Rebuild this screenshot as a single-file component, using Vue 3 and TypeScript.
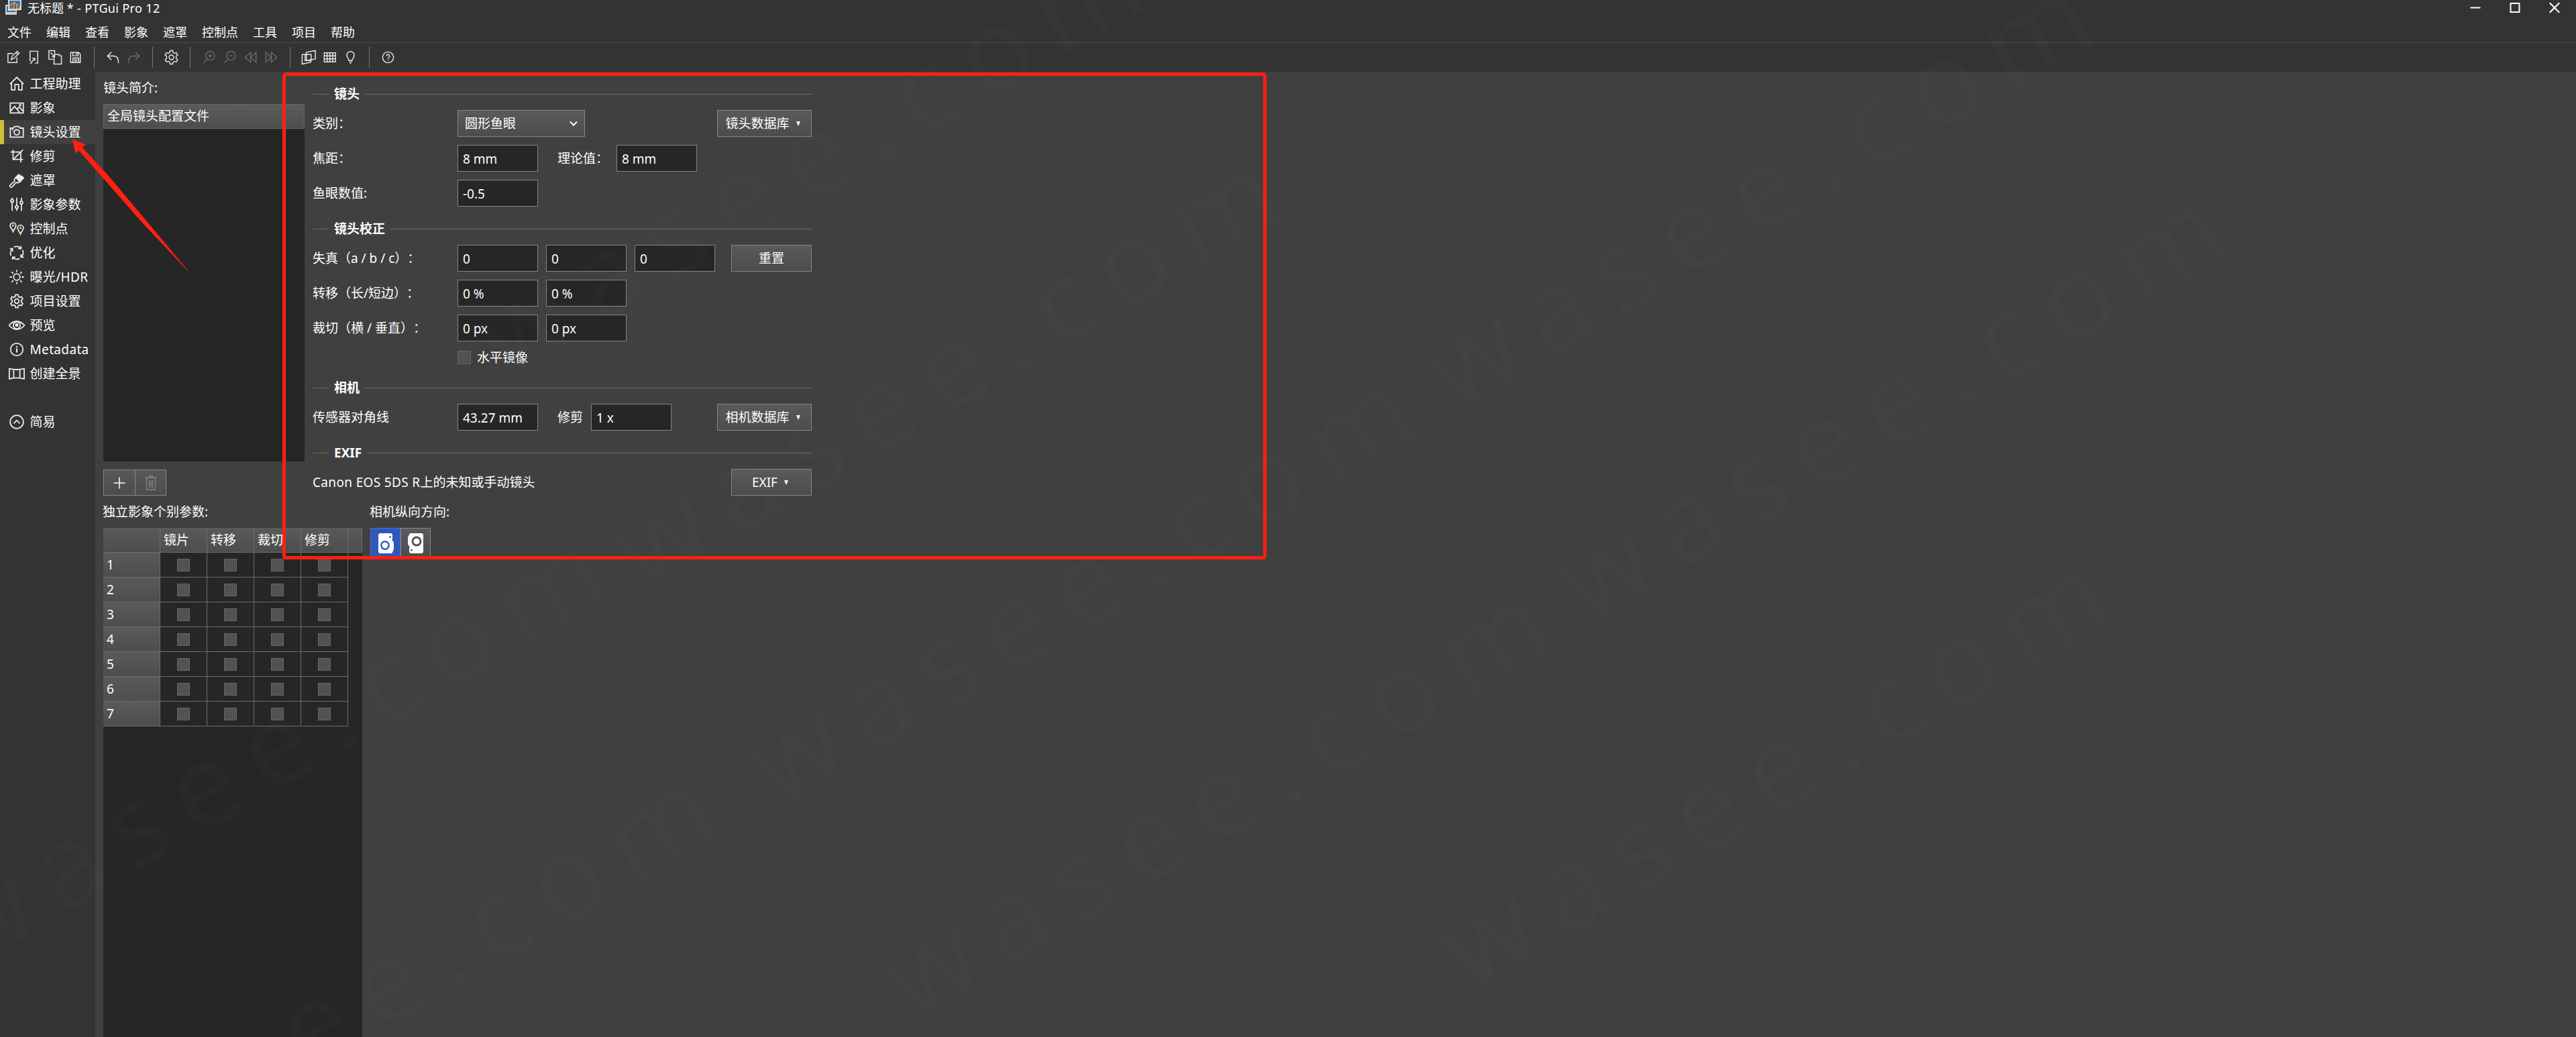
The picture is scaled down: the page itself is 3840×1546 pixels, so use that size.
<script setup lang="ts">
import { ref } from 'vue'

interface NavItem {
  label: string
  icon: string
}

const menus = ['文件', '编辑', '查看', '影象', '遮罩', '控制点', '工具', '项目', '帮助']

const gear =
  '<path d="M10 1.5h4l.6 3.1 2.1 1.2 3-1 2 3.4-2.3 2.2v3.2l2.3 2.2-2 3.4-3-1-2.1 1.2-.6 3.1h-4l-.6-3.1-2.1-1.2-3 1-2-3.4 2.3-2.2v-3.2L2.3 8.200l2-3.400 3 1 2.100-1.200z"/><circle cx="12" cy="12" r="3.600"/>'

const ringArrow = '<path d="M7.500 2.600A10.300 10.300 0 0 1 18 4M18.800 .8V5.200H14.200"/>'

// Each group is separated by a vertical rule; icons are drawn in a 24 x 24 box.
const toolGroups: { icon: string; off?: boolean }[][] = [
  [
    { icon: '<path d="M12 6H4v14h14v-8M9 15.500l1.500-5 8-8 3 3-8 8zM16.500 4.500l3 3"/>' },
    { icon: '<path d="M6 18V2.500h12v18.500h-4M6 21h3M7.500 20l6-6M9.500 13.500h4v4"/>' },
    { icon: '<path d="M10 15H3V1.500h9v6M11 10v12.500h11.500V9.500H19V7.500h-7.500M5.500 4.500l6 6M12 6.500v4.500H7.500"/>' },
    { icon: '<path d="M4.500 4.500h12.500l2.500 2.500v13h-15zM8 4.500v5h8v-5M13.500 5v3M8 20v-7h9v7M10 15.500h5M10 17.700h5"/>' }
  ],
  [
    { icon: '<path d="M9.500 4l-6 6 6 6M4 10h9q7.500 0 7.500 11"/>' },
    { icon: '<path d="M14.500 4l6 6-6 6M20 10h-9q-7.500 0-7.500 11"/>', off: true }
  ],
  [{ icon: gear }],
  [
    { icon: '<circle cx="14" cy="9.500" r="6.800"/><path d="M9.500 14.500L3.500 20.500M14 6.500v6M11 9.500h6"/>', off: true },
    { icon: '<circle cx="14" cy="9.500" r="6.800"/><path d="M9.500 14.500L3.500 20.500M11 9.500h6"/>', off: true },
    { icon: '<path d="M12 4.500v15l-8.500-7.500zM20.500 4.500v15L12 12z"/>', off: true },
    { icon: '<path d="M3.500 4.500v15l8.500-7.500zM12 4.500v15l8.500-7.500z"/>', off: true }
  ],
  [
    { icon: '<path d="M8 4l14-2.500v13L8 17zM6 7.500H1.500v15l13.500-3V17M6 7.500h9.500v9.500H6z"/>' },
    { icon: '<path d="M3.500 5h17.500v14H3.500zM8 5v14M12.200 5v14M16.500 5v14M3.500 9.700h17.500M3.500 14.300h17.500"/>' },
    { icon: '<path d="M9.500 17c0-3-3.300-4.500-3.300-8.300a5.800 5.800 0 0 1 11.600 0c0 3.800-3.300 5.300-3.300 8.300zM10 19.300h4M11 21.500h2"/>' }
  ],
  [{ icon: '<circle cx="12" cy="12" r="8.500"/><path d="M9.600 10a2.400 2.400 0 1 1 3.600 2q-1.200.8-1.200 2M12 15.600v1.400"/>' }]
]

const nav: (NavItem | null)[] = [
  { label: '工程助理', icon: '<path d="M1 12.500L12 1.500l11 11M3.500 10.500V22H9v-9h6v9h5.500V10.500"/>' },
  { label: '影象', icon: '<path d="M1.500 4h21v16h-21zM2 17l6.500-7.500 8 9.500M12.500 14l3.500-3.500 6 6.500"/><circle cx="17.500" cy="7.500" r="1"/>' },
  { label: '镜头设置', icon: '<path d="M1.500 5.500h5l2-2.500h7l2 2.500h5v14.500h-21z"/><circle cx="12" cy="12.300" r="4.300"/><path d="M4 8h2"/>' },
  { label: '修剪', icon: '<path d="M6 1.500V17h16M2 5h16.500v17M22 1.500L6.500 17"/>' },
  {
    label: '遮罩',
    icon: '<path d="M10.500 7l6.500 7-3.500 2-2.500-.8L4.500 22.500a2 2 0 0 1-3-3L8.500 13 8.200 10z"/><path fill="currentColor" d="M11 6.500l4-4 2.500 1.500 0 2.500 2.500-1.500 3 3-6 6.500z"/>'
  },
  {
    label: '影象参数',
    icon: '<path d="M4.500 1v3.500M4.500 8.500V22M12 1v13M12 18v4M19.500 1v6M19.500 11v11"/><circle cx="4.500" cy="6" r="2.200"/><circle cx="12" cy="16" r="2.200"/><circle cx="19.500" cy="9" r="2.200"/>'
  },
  {
    label: '控制点',
    icon: '<path d="M6 16.500c-1-3-4.700-6.500-4.700-9.500a4.700 4.700 0 0 1 9.400 0c0 3-3.700 6.500-4.700 9.500zM18 20.500c-1-3-4.700-6.500-4.700-9.500a4.700 4.700 0 0 1 9.400 0c0 3-3.700 6.500-4.700 9.500z"/><circle cx="6" cy="6.800" r=".6"/><circle cx="18" cy="10.800" r=".6"/>'
  },
  {
    label: '优化',
    icon: [0, 90, 180, 270].map((a) => `<g transform="rotate(${a} 12 12)">${ringArrow}</g>`).join('')
  },
  {
    label: '曝光/HDR',
    icon: '<circle cx="12" cy="12" r="5.200"/><path d="M12 .5v3.500M12 20v3.500M.5 12H4M20 12h3.500M3.800 3.800l2.600 2.600M17.600 17.600l2.600 2.600M20.200 3.800l-2.600 2.600M6.400 17.600l-2.600 2.600"/>'
  },
  { label: '项目设置', icon: gear },
  {
    label: '预览',
    icon: '<path d="M-.5 12Q5 5.500 12 5.500T24.500 12Q19 18.500 12 18.500T-.5 12z"/><circle cx="12" cy="12" r="5.500"/><circle cx="12" cy="11.500" r="1.800" fill="currentColor"/>'
  },
  { label: 'Metadata', icon: '<circle cx="12" cy="12" r="10"/><path stroke-width="2.400" d="M12 10.500V17M12 6.500v2.200"/>' },
  { label: '创建全景', icon: '<path d="M0 4q12 3 24 0v16.500q-12-3-24 0zM7 5.500v13.500M17 5.500v13.500"/>' },
  null,
  { label: '简易', icon: '<circle cx="12" cy="12" r="10.700"/><path d="M7 14.500l5-5 5 5"/>' }
]
const activeNav = ref('镜头设置')

const columns = ['镜片', '转移', '裁切', '修剪']
const rowCount = 7

const watermarks: [number, number][] = [
  [752, 566],
  [957, 882],
  [1157, 1206],
  [1358, 1524],
  [2166, 616],
  [2364, 934],
  [2190, 1480],
  [-50, 1446],
  [114, 1800]
]
</script>

<template>
  <div class="window">
    <header class="titlebar">
      <svg class="logo" width="24" height="24" viewBox="0 0 24 24">
        <path d="M0 7h17v15H0z" fill="#c9cdc8" />
        <path d="M2 9h13v9H2z" fill="#4c6f9c" />
        <path d="M4 -1h20v16L4 16z" fill="#d8dcde" />
        <path d="M6 1h16v12H6z" fill="#3c6da8" />
        <path d="M6 13V7l4-2 3-3 3 3 3 1 3 4v3z" fill="#b49a78" />
        <path d="M8 8v5M11 6v7M15 6v7M19 8v5" stroke="#4b4542" stroke-width="1.500" />
      </svg>
      <span class="title">无标题 <span class="latin">* - PTGui Pro 12</span></span>
      <div class="controls">
        <svg width="16" height="24" viewBox="0 0 16 24"><path d="M.5 11.500h15" /></svg>
        <svg width="16" height="24" viewBox="0 0 16 24"><path d="M1.500 5h13v13h-13z" /></svg>
        <svg width="16" height="24" viewBox="0 0 16 24"><path d="M.8 4.300l14.400 14.400M15.200 4.300L.8 18.700" /></svg>
      </div>
    </header>

    <nav class="menubar">
      <span v-for="m in menus" :key="m">{{ m }}</span>
    </nav>

    <div class="toolbar">
      <template v-for="(group, g) in toolGroups" :key="g">
        <i v-if="g" class="rule"></i>
        <span v-for="(tool, t) in group" :key="t" class="tool" :class="{ off: tool.off }">
          <svg width="23" height="23" viewBox="0 0 24 24" v-html="tool.icon"></svg>
        </span>
      </template>
    </div>

    <div class="body">
      <aside class="sidebar">
        <div
          v-for="(item, i) in nav"
          :key="i"
          class="nav"
          :class="{ active: item && item.label === activeNav }"
        >
          <template v-if="item">
            <svg width="24" height="24" viewBox="-1 -1 26 26" v-html="item.icon"></svg>
            <span :class="{ latin: /[A-Z]/.test(item.label) }">{{ item.label }}</span>
          </template>
        </div>
      </aside>

      <main class="content">
        <div class="upper">
          <section class="profiles">
            <div class="caption">镜头简介:</div>
            <div class="list">
              <div class="entry">全局镜头配置文件</div>
            </div>
            <div class="actions">
              <button class="add">
                <svg width="20" height="20" viewBox="0 0 20 20"><path d="M10 1.500v17M1.500 10h17" /></svg>
              </button>
              <button class="del">
                <svg width="18" height="22" viewBox="0 0 18 22">
                  <path d="M1 3h16M6.500 3V1h5v2M2.500 3v18h13V3M6.500 7v11M9 7v11M11.500 7v11" />
                </svg>
              </button>
            </div>
          </section>

          <section class="form">
            <h3><span>镜头</span></h3>
            <div class="row">
              <label>类别：</label>
              <div class="select">
                圆形鱼眼
                <svg width="12" height="8" viewBox="0 0 12 8"><path d="M1 1.500l5 5 5-5" /></svg>
              </div>
              <button class="btn db">镜头数据库<i class="tri"></i></button>
            </div>
            <div class="row">
              <label>焦距：</label>
              <div class="field">8 mm</div>
              <span class="inner">理论值：</span>
              <div class="field">8 mm</div>
            </div>
            <div class="row">
              <label>鱼眼数值:</label>
              <div class="field">-0.5</div>
            </div>

            <h3><span>镜头校正</span></h3>
            <div class="row">
              <label>失真（a / b / c）：</label>
              <div class="field">0</div>
              <div class="field">0</div>
              <div class="field">0</div>
              <button class="btn small">重置</button>
            </div>
            <div class="row">
              <label>转移（长/短边）：</label>
              <div class="field">0 %</div>
              <div class="field">0 %</div>
            </div>
            <div class="row">
              <label>裁切（横 / 垂直）：</label>
              <div class="field">0 px</div>
              <div class="field">0 px</div>
            </div>
            <div class="row mirror">
              <label></label>
              <i class="check big"></i>
              <span>水平镜像</span>
            </div>

            <h3><span>相机</span></h3>
            <div class="row">
              <label>传感器对角线</label>
              <div class="field">43.27 mm</div>
              <span class="inner">修剪</span>
              <div class="field">1 x</div>
              <button class="btn db">相机数据库<i class="tri"></i></button>
            </div>

            <h3><span>EXIF</span></h3>
            <div class="row">
              <span><span class="latin">Canon EOS 5DS R</span>上的未知或手动镜头</span>
              <button class="btn small menu">EXIF<i class="tri"></i></button>
            </div>
          </section>
        </div>

        <div class="lower">
          <section class="params">
            <div class="sub">独立影象个别参数:</div>
            <div class="sheet">
              <div class="head">
                <div class="corner"></div>
                <div v-for="c in columns" :key="c" class="col">{{ c }}</div>
                <div class="rest"></div>
              </div>
              <div v-for="n in rowCount" :key="n" class="line">
                <div class="num">{{ n }}</div>
                <div v-for="c in columns" :key="c" class="cell"><i class="check"></i></div>
              </div>
            </div>
          </section>

          <section class="orient">
            <div class="sub">相机纵向方向:</div>
            <div class="toggle">
              <div class="opt on">
                <svg width="24" height="32" viewBox="0 0 24 32">
                  <path d="M4 1h15q3 0 3 3v4q0 2-1 3 2 1 3 4v10q-1 2-2 4 0 2-3 2H4q-3 0-3-3V4q0-3 3-3z" fill="#fff" />
                  <circle cx="11" cy="19" r="5.700" fill="#fff" stroke="#2f58bb" stroke-width="2.400" />
                  <circle cx="18.500" cy="6.500" r="1.500" fill="#2f58bb" />
                </svg>
              </div>
              <div class="opt">
                <svg width="24" height="32" viewBox="0 0 24 32">
                  <path d="M20 31H5q-3 0-3-3v-4q0-2 1-3-2-1-3-4V7q1-2 2-4 0-2 3-2h15q3 0 3 3v24q0 3-3 3z" fill="#fff" />
                  <circle cx="13" cy="13" r="6" fill="#fff" stroke="#4f4f4f" stroke-width="2.800" />
                  <circle cx="5.500" cy="26" r="1.500" fill="#4f4f4f" />
                </svg>
              </div>
            </div>
          </section>
        </div>
      </main>
    </div>

    <svg class="overlay" width="3840" height="1546" viewBox="0 0 3840 1546">
      <g class="mark">
        <text v-for="([x, y], i) in watermarks" :key="i" :transform="`translate(${x} ${y}) rotate(-30)`">wasee.com</text>
      </g>
      <rect x="423.500" y="110.500" width="1462" height="721" rx="3" fill="none" stroke="#ff2012" stroke-width="5" />
      <path
        d="M108.500 208.500L127.500 215.500 122 219.500 160 260.500 216 327 280 403.500 211.500 331 150.500 261.500 117.500 224 112.700 228z"
        fill="#ff2012"
        stroke="#ff2012"
        stroke-width=".8"
        stroke-linejoin="round"
      />
    </svg>
  </div>
</template>

<style>
body {
  background: #404040;
}
</style>

<style scoped>
.window {
  position: relative;
  display: flex;
  flex-direction: column;
  width: 3840px;
  height: 1546px;
  overflow: hidden;
  background: #404040;
  color: #fff;
  font-family: 'Noto Sans', 'Noto Sans CJK SC', sans-serif;
  font-size: 19px;
  line-height: 24px;
  text-spacing-trim: space-all;
  white-space: nowrap;
}
* {
  box-sizing: border-box;
}
svg {
  flex: none;
}
button {
  color: inherit;
  font: inherit;
  padding: 0;
  margin: 0;
}
.latin {
  letter-spacing: 0.35px;
}

.titlebar {
  display: flex;
  align-items: center;
  height: 32px;
  padding: 0 24px 8px 8px;
  background: #333;
  font-size: 18px;
}
.logo {
  margin-right: 9px;
}
.controls {
  display: flex;
  gap: 43px;
  margin-left: auto;
}
.controls svg {
  fill: none;
  stroke: #fff;
  stroke-width: 2;
}
.menubar {
  display: flex;
  align-items: center;
  gap: 22px;
  height: 32px;
  padding-left: 11px;
  background: #333;
  border-bottom: 1px solid #4c4c4c;
  font-size: 18px;
}
.toolbar {
  display: flex;
  align-items: center;
  height: 43px;
  padding-left: 3.500px;
  background: #333;
}
.tool {
  display: flex;
  justify-content: center;
  width: 31px;
}
.tool svg {
  fill: none;
  stroke: #e8e8e8;
  stroke-width: 1.500;
}
.tool.off svg {
  stroke: #6b6b6b;
}
.rule {
  width: 1px;
  height: 31px;
  margin: 0 12px;
  background: #777;
}

.body {
  display: flex;
  flex: 1;
}
.sidebar {
  width: 142px;
  background: #333;
}
.nav {
  display: flex;
  align-items: center;
  gap: 7.500px;
  height: 36px;
  padding-left: 13px;
}
.nav.active {
  background: #404040;
  border-left: 6px solid #cdbf36;
  padding-left: 7px;
}
.nav svg {
  color: #ececec;
  fill: none;
  stroke: #ececec;
  stroke-width: 1.900;
}

.content {
  display: flex;
  flex-direction: column;
  padding-left: 12px;
}
.upper {
  display: flex;
  gap: 12px;
  height: 632px;
}
.profiles {
  display: flex;
  flex-direction: column;
  width: 300px;
}
.caption {
  height: 48px;
  padding-top: 12px;
}
.list {
  height: 533px;
  background: #262626;
}
.entry {
  height: 37px;
  padding: 5px 5px 0;
  background: linear-gradient(#5b5b5b, #4d4d4d);
  border: 1px solid #686868;
}
.actions {
  display: flex;
  height: 39px;
  margin-top: 12px;
}
.actions button {
  display: flex;
  align-items: center;
  justify-content: center;
  border: 1px solid #858585;
  background: linear-gradient(#585858, #4c4c4c);
}
.actions svg {
  fill: none;
  stroke: #fff;
  stroke-width: 1.500;
}
.add {
  width: 48px;
}
.actions .del {
  width: 47px;
  margin-left: -1px;
}
.actions .del svg {
  stroke: #858585;
  stroke-width: 1.300;
}

.form {
  display: flex;
  flex-direction: column;
  gap: 12px;
  width: 744px;
  padding-top: 12px;
}
.form h3 {
  display: flex;
  align-items: center;
  gap: 8px;
  height: 24px;
  margin: 9px 0 0;
  font-size: 19px;
  font-weight: 700;
}
.form h3::before,
.form h3::after {
  content: '';
  height: 1px;
  background: #6c6c6c;
}
.form h3::before {
  width: 24px;
}
.form h3::after {
  flex: 1;
}
.row {
  display: flex;
  align-items: center;
  gap: 12px;
  height: 40px;
}
.row label {
  width: 204px;
}
.field {
  width: 120px;
  height: 40px;
  padding: 8px 7px 0;
  border: 1px solid #858585;
  background: #262626;
}
.inner {
  margin-left: 17px;
}
.select,
.btn {
  display: flex;
  align-items: center;
  height: 40px;
  border: 1px solid #858585;
  background: linear-gradient(#5a5a5a, #4c4c4c);
}
.select {
  justify-content: space-between;
  width: 190px;
  padding: 0 10px;
}
.select svg {
  fill: none;
  stroke: #fff;
  stroke-width: 2;
}
.btn {
  justify-content: center;
  margin-left: auto;
}
.btn.db {
  width: 141px;
  padding-right: 5px;
}
.btn.small {
  width: 120px;
}
.btn.menu {
  padding-right: 4px;
}
.tri {
  margin-left: 10px;
  border: 3.500px solid transparent;
  border-top: 7px solid #fff;
  border-bottom: 0;
}
.mirror {
  height: 24px;
}
.mirror span {
  margin-left: -3px;
}
.check {
  width: 19px;
  height: 19px;
  border: 1px solid #666;
  background: #525252;
}
.check.big {
  width: 20px;
  height: 20px;
}

.lower {
  display: flex;
  flex: 1;
  gap: 12px;
  padding-top: 12px;
}
.params {
  display: flex;
  flex-direction: column;
  width: 386px;
}
.sub {
  height: 36px;
  margin-left: -1px;
}
.sheet {
  flex: 1;
  background: #262626;
}
.head,
.line {
  display: flex;
  height: 37px;
}
.head {
  background: linear-gradient(#5a5a5a, #4d4d4d);
  border-bottom: 1px solid #6c6c6c;
}
.corner,
.num {
  width: 85px;
  border-right: 1px solid #6c6c6c;
}
.col {
  width: 70px;
  padding: 6px 5px 0;
  border-right: 1px solid #6c6c6c;
}
.rest {
  flex: 1;
  border-right: 1px solid #6c6c6c;
}
.num {
  padding: 6px 5px 0;
  background: linear-gradient(#5a5a5a, #4d4d4d);
  border-bottom: 1px solid #6c6c6c;
}
.cell {
  display: flex;
  align-items: center;
  justify-content: center;
  width: 70px;
  border-right: 1px solid #6c6c6c;
  border-bottom: 1px solid #6c6c6c;
}

.toggle {
  display: flex;
  width: 90px;
  height: 45px;
}
.opt {
  display: flex;
  align-items: center;
  justify-content: center;
  width: 45px;
  border: 1px solid #858585;
  background: linear-gradient(#5a5a5a, #4c4c4c);
}
.opt.on {
  background: #2f58bb;
  border-color: #4a6fc8;
}

.overlay {
  position: absolute;
  inset: 0;
  pointer-events: none;
}
.mark text {
  fill: rgba(128, 128, 128, 0.04);
  font-size: 170px;
  letter-spacing: 28px;
}
</style>
